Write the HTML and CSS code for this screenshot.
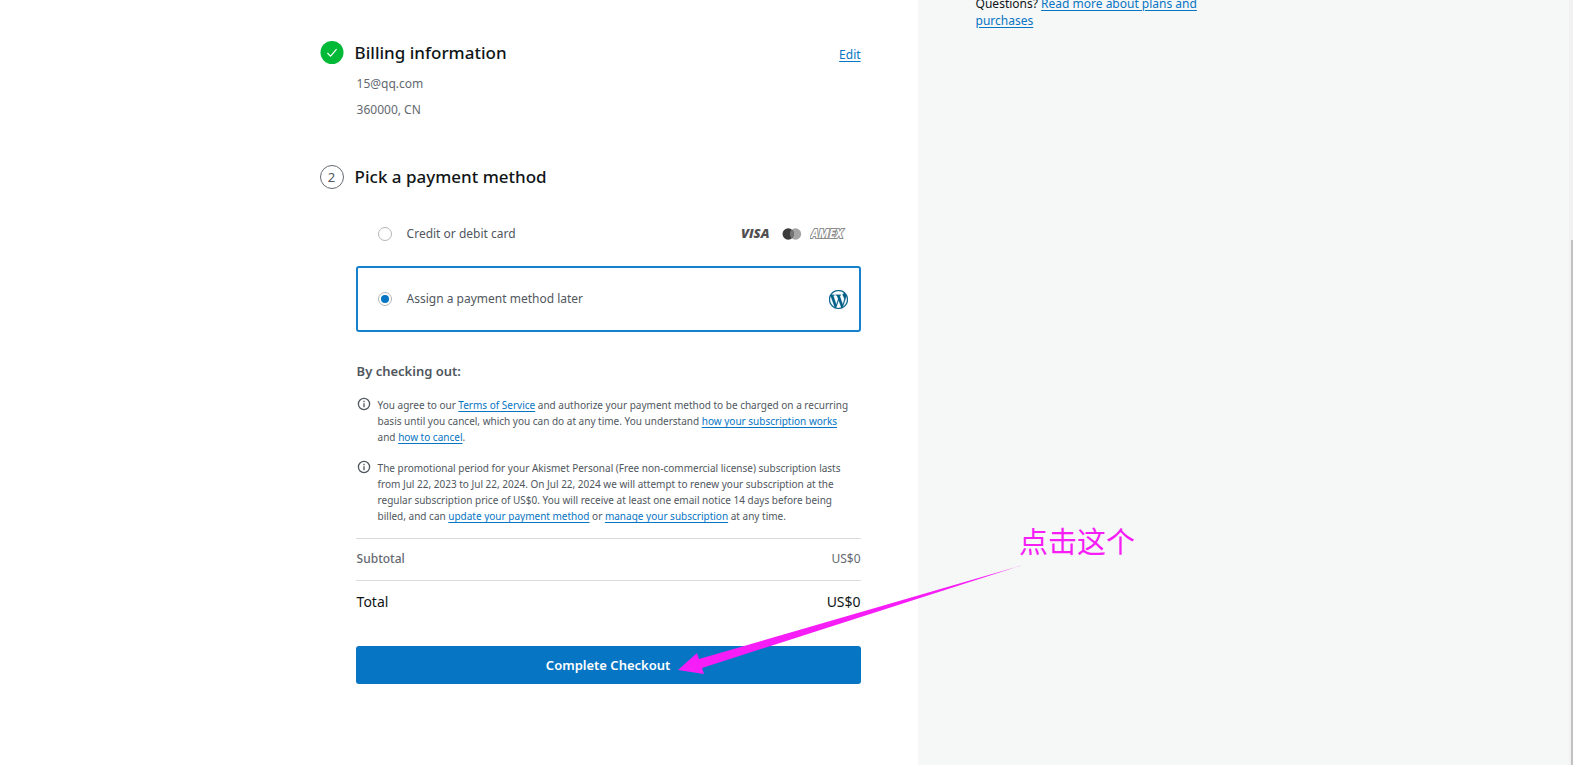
FILE: index.html
```html
<!DOCTYPE html>
<html lang="en">
<head>
<meta charset="utf-8">
<title>Checkout</title>
<link rel="stylesheet" href="styles.css">
</head>
<body>
<div class="page">
  <main class="checkout">
    <div class="steps">
      <section class="step">
        <header class="step-header">
          <svg class="step-icon" viewBox="0 0 24 24" aria-hidden="true"><circle cx="12" cy="11.5" r="11.5" fill="#00ba37"/><path d="M7.4 12l3.2 3.2 6-7" fill="none" stroke="#fff" stroke-width="1.2"/></svg>
          <h2 class="step-title">Billing information</h2>
          <a class="edit" href="#edit">Edit</a>
        </header>
        <div class="billing">
          <p>15@qq.com</p>
          <p>360000, CN</p>
        </div>
      </section>

      <form class="step">
        <header class="step-header">
          <span class="step-number">2</span>
          <h2 class="step-title">Pick a payment method</h2>
        </header>
        <div class="step-body">
          <label class="method">
            <input class="radio" type="radio" name="method" value="card">
            <span class="method-name">Credit or debit card</span>
            <span class="logos">
              <svg width="34" height="16" viewBox="0 0 34 16"><text class="visa" x="1" y="12">VISA</text></svg>
              <svg width="20" height="16" viewBox="0 0 20 16"><circle cx="13.5" cy="8" r="5.7" fill="#a5a5a5"/><circle cx="6.2" cy="8" r="5.7" fill="#3c3c3c"/><path d="M9.9 3.6a5.7 5.7 0 0 1 0 8.8 5.7 5.7 0 0 1 0-8.8" fill="#747474"/></svg>
              <svg width="38" height="16" viewBox="0 0 38 16"><text class="amex" x="1" y="12">AMEX</text></svg>
            </span>
          </label>
          <label class="method selected">
            <input class="radio" type="radio" name="method" value="later" checked>
            <span class="method-name">Assign a payment method later</span>
            <svg class="wordpress" viewBox="0 0 24 24" aria-hidden="true"><path fill="#006088" stroke="#006088" stroke-width=".4" d="M21.469 6.825c.84 1.537 1.318 3.3 1.318 5.175 0 3.979-2.156 7.456-5.363 9.325l3.295-9.527c.615-1.54.82-2.771.82-3.864 0-.405-.026-.78-.07-1.11m-7.981.105c.647-.03 1.232-.105 1.232-.105.582-.075.514-.93-.067-.899 0 0-1.755.135-2.88.135-1.064 0-2.85-.15-2.85-.15-.585-.03-.661.855-.075.885 0 0 .54.061 1.125.09l1.68 4.605-2.37 7.08L5.354 6.9c.649-.03 1.234-.1 1.234-.1.585-.075.516-.93-.065-.896 0 0-1.746.138-2.874.138-.2 0-.438-.008-.69-.015C4.911 3.15 8.235 1.215 12 1.215c2.809 0 5.365 1.072 7.286 2.833-.046-.003-.091-.009-.141-.009-1.06 0-1.812.923-1.812 1.914 0 .89.513 1.643 1.06 2.531.411.72.89 1.643.89 2.977 0 .915-.354 1.994-.821 3.479l-1.075 3.585-3.9-11.61.001.014zM12 22.784c-1.059 0-2.081-.153-3.048-.437l3.237-9.406 3.315 9.087c.024.053.05.101.078.149-1.12.393-2.325.609-3.582.609M1.211 12c0-1.564.336-3.05.935-4.39L7.29 21.709C3.694 19.96 1.212 16.271 1.211 12M12 0C5.385 0 0 5.385 0 12s5.385 12 12 12 12-5.385 12-12S18.615 0 12 0"/></svg>
          </label>

          <h3 class="terms-title">By checking out:</h3>
          <div class="term">
            <svg class="info" viewBox="0 0 14 14" aria-hidden="true"><circle cx="7" cy="7" r="5.6" fill="none" stroke="#50575e" stroke-width="1.3"/><path d="M7 6.2v4M7 3.8v1.4" stroke="#50575e" stroke-width="1.3"/></svg>
            <p>You agree to our <a href="#tos">Terms of Service</a> and authorize your payment method to be charged on a recurring<br>basis until you cancel, which you can do at any time. You understand <a href="#works">how your subscription works</a><br>and <a href="#cancel">how to cancel</a>.</p>
          </div>
          <div class="term">
            <svg class="info" viewBox="0 0 14 14" aria-hidden="true"><circle cx="7" cy="7" r="5.6" fill="none" stroke="#50575e" stroke-width="1.3"/><path d="M7 6.2v4M7 3.8v1.4" stroke="#50575e" stroke-width="1.3"/></svg>
            <p>The promotional period for your Akismet Personal (Free non-commercial license) subscription lasts<br>from Jul 22, 2023 to Jul 22, 2024. On Jul 22, 2024 we will attempt to renew your subscription at the<br>regular subscription price of US$0. You will receive at least one email notice 14 days before being<br>billed, and can <a href="#update">update your payment method</a> or <a href="#manage">manage your subscription</a> at any time.</p>
          </div>

          <div class="row subtotal"><span class="row-name">Subtotal</span><span>US$0</span></div>
          <div class="row total"><span>Total</span><span>US$0</span></div>
          <button class="submit" type="button">Complete Checkout</button>
        </div>
      </form>
    </div>
  </main>
  <aside class="sidebar">
    <p class="questions">Questions? <a href="#plans">Read more about plans and<br>purchases</a></p>
  </aside>
  <div class="scrollbar"><div class="thumb"></div></div>
  <svg class="arrow" width="345" height="111" viewBox="0 0 345 111" aria-hidden="true"><path d="M0 105L19 88l2 6L345 0 24 103l2 6z" fill="#f61df6"/></svg>
  <div class="note" lang="zh">点击这个</div>
</div>
</body>
</html>
```
FILE: styles.css
```css
* { box-sizing: border-box; }
body {
  margin: 0;
  font-family: "Noto Sans", "Open Sans", sans-serif;
  font-size: 12px;
  line-height: 20px;
  color: #50575e;
  background: #fff;
}
h2, h3, p { margin: 0; }
a { color: #0675c4; text-underline-offset: 2px; }
.page {
  position: relative;
  display: grid;
  grid-template-columns: 7fr 5fr;
  min-height: 100vh;
  overflow: hidden;
}
.checkout { display: flex; justify-content: flex-end; padding: 39px 57px 40px 20px; }
.steps { width: 100%; max-width: 541px; }
.step-header { display: flex; align-items: center; height: 28px; }
.step-icon, .step-number { flex: none; width: 24px; height: 24px; margin-right: 11px; }
.step-number {
  border: 1px solid #646970;
  border-radius: 50%;
  font-size: 13px;
  line-height: 22px;
  text-align: center;
}
.step-title { flex: 1; font-size: 17px; font-weight: 500; line-height: 28px; color: #101517; }
.edit { padding-top: 3px; }
.billing { padding: 7px 0 37px 37px; color: #646970; }
.billing p { height: 26px; }
.step-body { padding: 11px 0 0 36px; }
.method {
  display: flex;
  align-items: center;
  height: 64px;
  padding: 0 13px 0 22px;
  border-radius: 3px;
}
.method.selected { height: 66px; padding: 0 11px 0 20px; border: 2px solid #1580cc; }
.radio {
  appearance: none;
  display: grid;
  place-items: center;
  width: 14px;
  height: 14px;
  margin: 0 15px 0 0;
  border: 1px solid #b4b6b9;
  border-radius: 50%;
}
.radio:checked::before { content: ""; width: 8px; height: 8px; border-radius: 50%; background: #0675c4; }
.method-name { flex: 1; }
.logos { display: flex; gap: 8px; }
.visa { font: italic 800 13px "Open Sans", sans-serif; fill: #505050; }
.amex { font: italic 700 12px "Open Sans", sans-serif; fill: #fff; stroke: #8c8c8c; stroke-width: 2px; paint-order: stroke; }
.wordpress { width: 19px; height: 19px; }
.terms-title { padding: 29px 0 13px 1px; font-size: 13px; font-weight: 600; }
.term { display: flex; gap: 7px; padding: 3px 0 12px 1px; font-size: 10px; line-height: 16px; }
.term:last-of-type { padding-bottom: 14px; }
.term p { white-space: nowrap; }
.info { flex: none; width: 14px; height: 14px; }
.row { display: flex; justify-content: space-between; padding-left: 1px; border-top: 1px solid #dcdcde; }
.subtotal { margin-top: 2px; padding-top: 10px; padding-bottom: 11px; color: #646970; }
.row-name { font-weight: 500; }
.total { padding-top: 11px; padding-bottom: 34px; font-size: 14px; color: #101517; }
.submit {
  width: 100%;
  height: 38px;
  border: 0;
  border-radius: 3px;
  background: #0675c4;
  color: #fff;
  font: 600 13px "Noto Sans", sans-serif;
}
.sidebar { background: #f6f7f7; padding: 0 58px; }
.questions { margin-top: -5px; line-height: 17px; color: #101517; }
.scrollbar { position: absolute; top: 0; right: 0; bottom: 0; width: 4px; padding: 240px 0 0 2px; background: #f1f1f1; }
.thumb { height: 100%; background: #c1c1c1; }
.arrow { position: absolute; left: 678px; top: 565px; }
.note {
  position: absolute;
  left: 1019px;
  top: 520px;
  font-family: "Noto Sans CJK SC", sans-serif;
  font-size: 29px;
  line-height: 40px;
  color: #f61df6;
}
```
